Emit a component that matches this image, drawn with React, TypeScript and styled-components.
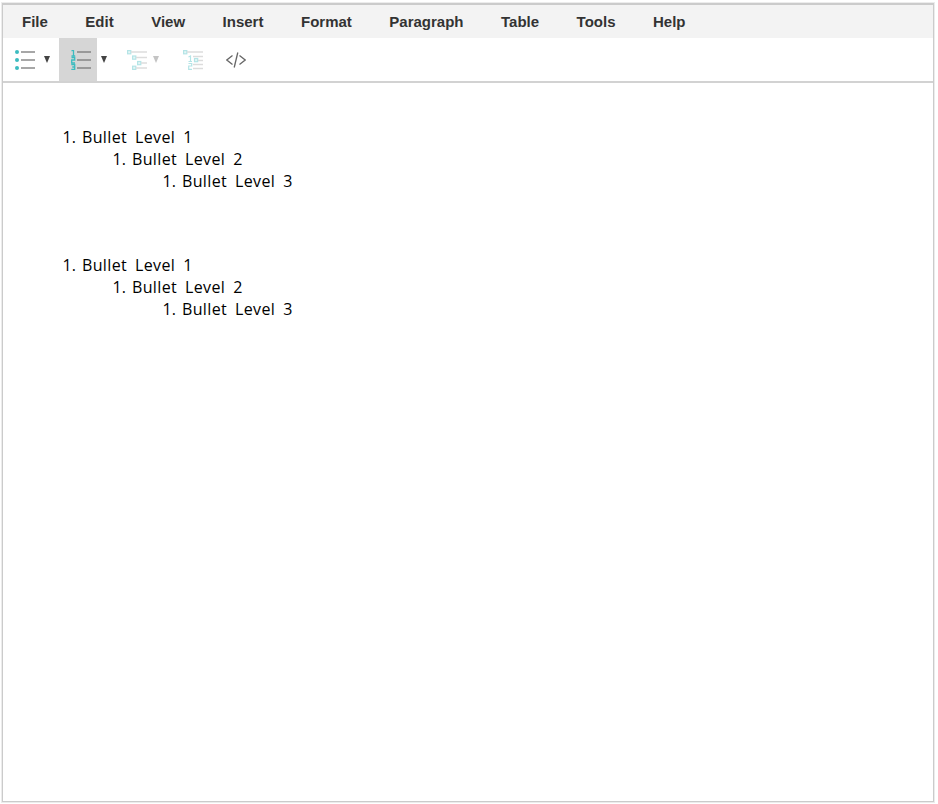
import React from 'react';
import styled, { createGlobalStyle } from 'styled-components';

const GlobalStyle = createGlobalStyle`
  html, body {
    margin: 0;
    padding: 0;
    background: #fff;
  }
`;

const Page = styled.div`
  box-sizing: border-box;
  width: 938px;
  height: 804px;
  padding: 3px 4px 2px 2px;
`;

const Editor = styled.div`
  box-sizing: border-box;
  height: 100%;
  display: flex;
  flex-direction: column;
  border: solid #cbcbcb;
  border-width: 2px 1px 1px 1px;
  box-shadow: 0 0 0 1px #ececec;
`;

const MenuBar = styled.div`
  height: 33px;
  display: flex;
  align-items: center;
  gap: 37.5px;
  padding-left: 19px;
  background: #f3f3f3;
`;

const MenuItem = styled.span`
  font: bold 15px "Liberation Sans", Arial, sans-serif;
  color: #333;
`;

const ToolBar = styled.div`
  height: 43px;
  display: flex;
  align-items: stretch;
  background: #fff;
  border-bottom: 2px solid #d2d2d2;
`;

const ToolButton = styled.div<{ $width: number; $pad: number; $active?: boolean }>`
  box-sizing: border-box;
  width: ${(p) => p.$width}px;
  padding-left: ${(p) => p.$pad}px;
  display: flex;
  align-items: center;
  background: ${(p) => (p.$active ? '#d6d6d6' : 'transparent')};
`;

const Caret = styled.span<{ $disabled?: boolean; $gap: number }>`
  width: 0;
  height: 0;
  margin-left: ${(p) => p.$gap}px;
  border-left: 3px solid transparent;
  border-right: 3px solid transparent;
  border-top: 7px solid ${(p) => (p.$disabled ? '#c4c4c4' : '#444')};
`;

const Content = styled.div`
  flex: 1;
  padding-top: 43px;
  font: 16px/22px "Open Sans", "Noto Sans", sans-serif;
  color: #000;
`;

const List = styled.ol<{ $nested?: boolean }>`
  margin: 0;
  padding-left: ${(p) => (p.$nested ? 50 : 79)}px;
  letter-spacing: 0.35px;
  word-spacing: 3.5px;

  li::marker {
    letter-spacing: 0;
    word-spacing: 2px;
  }
`;

const BlankLine = styled.div`
  height: 62px;
`;

const BulletIcon = () => (
  <svg width="20" height="20" viewBox="0 0 20 20">
    <g fill="#3bbcc0">
      <circle cx="2" cy="2" r="2" />
      <circle cx="2" cy="10" r="2" />
      <circle cx="2" cy="18" r="2" />
    </g>
    <g stroke="#777" strokeWidth="1.3">
      <line x1="6" x2="20" y1="2" y2="2" />
      <line x1="6" x2="20" y1="10" y2="10" />
      <line x1="6" x2="20" y1="18" y2="18" />
    </g>
  </svg>
);

const NumberIcon = () => (
  <svg width="20" height="20" viewBox="0 0 20 20">
    <g fill="none" stroke="#3bbcc0" strokeWidth="1.3">
      <path d="M.5 1 2.5 0V6M.5 6H4.2" />
      <path d="M.5 7.5H3.7V10H.7V13H4" />
      <path d="M.3 14.5H3.7V19.5H.3M1.3 17H3.7" />
    </g>
    <g stroke="#777" strokeWidth="1.3">
      <line x1="6" x2="20" y1="2" y2="2" />
      <line x1="6" x2="20" y1="10" y2="10" />
      <line x1="6" x2="20" y1="18" y2="18" />
    </g>
  </svg>
);

const MultiBulletIcon = () => (
  <svg width="20" height="20" viewBox="0 0 20 20">
    <g fill="#e4f6f6" stroke="#b4e4e6" strokeWidth="1.2">
      <rect x=".6" y=".6" width="3.2" height="3.2" />
      <rect x="5.6" y="6" width="3.2" height="3.2" />
      <rect x="10.6" y="11.5" width="3.2" height="3.2" />
      <rect x="5.6" y="16.2" width="3.2" height="3.2" />
    </g>
    <g stroke="#dcdcdc" strokeWidth="1.5">
      <line x1="4" x2="20" y1="2" y2="2" />
      <line x1="9" x2="20" y1="7.5" y2="7.5" />
      <line x1="14" x2="20" y1="13" y2="13" />
      <line x1="9" x2="20" y1="18" y2="18" />
    </g>
  </svg>
);

const MultiNumberIcon = () => (
  <svg width="20" height="20" viewBox="0 0 20 20">
    <g fill="none" stroke="#b4e4e6" strokeWidth="1.2">
      <rect x=".6" y=".6" width="3.2" height="3.2" fill="#e4f6f6" />
      <path d="M5.5 7 7.5 6V11.5M5.5 11.5H9" />
      <rect x="11.5" y="8.5" width="3.2" height="3.2" fill="#e4f6f6" />
      <path d="M5.5 13.5H8.7V16H5.7V19.3H9" />
    </g>
    <g stroke="#dcdcdc" strokeWidth="1.5">
      <line x1="4" x2="20" y1="2" y2="2" />
      <line x1="10" x2="20" y1="6.5" y2="6.5" />
      <line x1="15" x2="20" y1="10.5" y2="10.5" />
      <line x1="10" x2="20" y1="14.5" y2="14.5" />
      <line x1="10" x2="20" y1="18.5" y2="18.5" />
    </g>
  </svg>
);

const CodeIcon = () => (
  <svg width="20" height="16" viewBox="0 0 20 16" fill="none" stroke="#666" strokeWidth="1.3">
    <path d="M6.5 3.5.8 8l5.7 4.5" />
    <path d="M8.2 15.5 11.8.5" />
    <path d="M13.5 3.5 19.2 8l-5.7 4.5" />
  </svg>
);

const menus = ['File', 'Edit', 'View', 'Insert', 'Format', 'Paragraph', 'Table', 'Tools', 'Help'];

function NestedList() {
  return (
    <List>
      <li>
        Bullet Level 1
        <List $nested>
          <li>
            Bullet Level 2
            <List $nested>
              <li>Bullet Level 3</li>
            </List>
          </li>
        </List>
      </li>
    </List>
  );
}

export default function App() {
  return (
    <Page>
      <GlobalStyle />
      <Editor>
        <MenuBar>
          {menus.map((m) => (
            <MenuItem key={m}>{m}</MenuItem>
          ))}
        </MenuBar>
        <ToolBar>
          <ToolButton $width={56} $pad={12}>
            <BulletIcon />
            <Caret $gap={9} />
          </ToolButton>
          <ToolButton $width={38} $pad={12} $active>
            <NumberIcon />
          </ToolButton>
          <ToolButton $width={30} $pad={4}>
            <Caret $gap={0} />
          </ToolButton>
          <ToolButton $width={56} $pad={0}>
            <MultiBulletIcon />
            <Caret $gap={6} $disabled />
          </ToolButton>
          <ToolButton $width={43} $pad={0}>
            <MultiNumberIcon />
          </ToolButton>
          <ToolButton $width={40} $pad={0}>
            <CodeIcon />
          </ToolButton>
        </ToolBar>
        <Content>
          <NestedList />
          <BlankLine />
          <NestedList />
        </Content>
      </Editor>
    </Page>
  );
}
